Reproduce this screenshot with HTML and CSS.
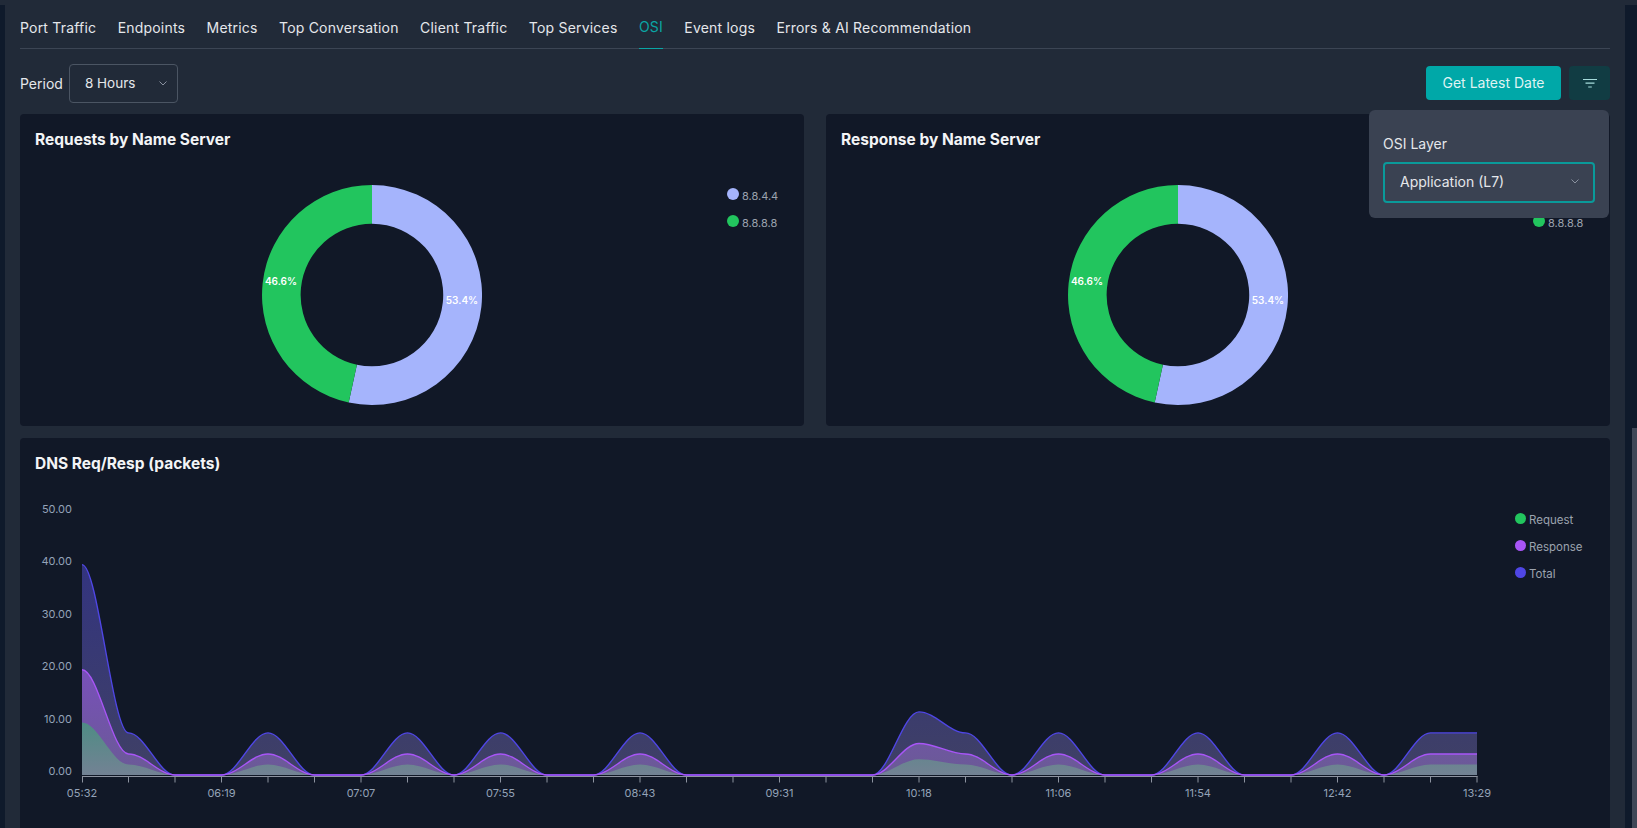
FILE: index.html
```html
<!DOCTYPE html>
<html lang="en">
<head>
<meta charset="utf-8">
<title>OSI</title>
<link rel="stylesheet" href="styles.css">
</head>
<body>
<div class="app">
  <div class="rail"></div>
  <main class="main">
    <nav class="tabs">
      <a class="tab">Port Traffic</a>
      <a class="tab">Endpoints</a>
      <a class="tab">Metrics</a>
      <a class="tab">Top Conversation</a>
      <a class="tab">Client Traffic</a>
      <a class="tab">Top Services</a>
      <a class="tab active">OSI</a>
      <a class="tab">Event logs</a>
      <a class="tab">Errors &amp; AI Recommendation</a>
    </nav>
    <div class="toolbar">
      <div class="period">
        <span class="period-label">Period</span>
        <div class="select select-period">
          <span>8 Hours</span>
          <svg class="chev" viewBox="0 0 8 5"><path d="M.5.5 4 4 7.5.5" fill="none" stroke="currentColor"/></svg>
        </div>
      </div>
      <div class="actions">
        <button class="btn-primary">Get Latest Date</button>
        <button class="btn-filter" aria-label="Filter">
          <svg viewBox="0 0 14 9" width="14" height="9"><path d="M0 .5h14M2.5 4.2h9M5.2 8h3.6" stroke="#a6dcdc" stroke-width="1.2" fill="none"/></svg>
        </button>
        <div class="popover">
          <div class="pop-label">OSI Layer</div>
          <div class="select select-focus">
            <span>Application (L7)</span>
            <svg class="chev" viewBox="0 0 8 5"><path d="M.5.5 4 4 7.5.5" fill="none" stroke="currentColor"/></svg>
          </div>
        </div>
      </div>
    </div>

    <section class="donut-row">
      <article class="card">
        <h2 class="card-title">Requests by Name Server</h2>
        <div class="donut-body">
          <div class="donut-area">
            <svg class="donut" viewBox="0 0 220 220" width="220" height="220">
              <path d="M110 0A110 110 0 1 1 86.7 217.5L94.9 179.7A71.3 71.3 0 1 0 110 38.7Z" fill="#a5b4fc"/>
              <path d="M86.7 217.5A110 110 0 0 1 110 0V38.7A71.3 71.3 0 0 0 94.9 179.7Z" fill="#22c55e"/>
              <text class="pct" x="200" y="119">53.4%</text>
              <text class="pct" x="19" y="100">46.6%</text>
            </svg>
          </div>
          <ul class="legend legend-small">
            <li><i class="dot dot-indigo"></i>8.8.4.4</li>
            <li><i class="dot dot-green"></i>8.8.8.8</li>
          </ul>
        </div>
      </article>
      <article class="card">
        <h2 class="card-title">Response by Name Server</h2>
        <div class="donut-body">
          <div class="donut-area">
            <svg class="donut" viewBox="0 0 220 220" width="220" height="220">
              <path d="M110 0A110 110 0 1 1 86.7 217.5L94.9 179.7A71.3 71.3 0 1 0 110 38.7Z" fill="#a5b4fc"/>
              <path d="M86.7 217.5A110 110 0 0 1 110 0V38.7A71.3 71.3 0 0 0 94.9 179.7Z" fill="#22c55e"/>
              <text class="pct" x="200" y="119">53.4%</text>
              <text class="pct" x="19" y="100">46.6%</text>
            </svg>
          </div>
          <ul class="legend legend-small">
            <li><i class="dot dot-indigo"></i>8.8.4.4</li>
            <li><i class="dot dot-green"></i>8.8.8.8</li>
          </ul>
        </div>
      </article>
    </section>

    <article class="card card-wide">
      <h2 class="card-title">DNS Req/Resp (packets)</h2>
      <div class="wide-body">
        <svg class="area-chart" viewBox="20 0 1480 330" width="1480" height="330">
          <defs>
            <linearGradient id="gTotal" gradientUnits="userSpaceOnUse" x1="0" y1="80" x2="0" y2="291">
              <stop offset="0" stop-color="#33347f"/><stop offset="1" stop-color="#3f4065"/>
            </linearGradient>
            <linearGradient id="gResp" gradientUnits="userSpaceOnUse" x1="0" y1="185" x2="0" y2="291">
              <stop offset="0" stop-color="#7850ba"/><stop offset="1" stop-color="#6a5a95"/>
            </linearGradient>
            <linearGradient id="gReq" gradientUnits="userSpaceOnUse" x1="0" y1="238" x2="0" y2="291">
              <stop offset="0" stop-color="#4e8c84"/><stop offset="1" stop-color="#738294"/>
            </linearGradient>
          </defs>
          <g class="ylabels">
            <text x="72" y="29">50.00</text>
            <text x="72" y="81">40.00</text>
            <text x="72" y="134">30.00</text>
            <text x="72" y="186">20.00</text>
            <text x="72" y="239">10.00</text>
            <text x="72" y="291">0.00</text>
          </g>

          <path fill="url(#gTotal)" d="M82 80.6c16 0 30.5 168.3 46.5 168.3c16 0 30.5 42.1 46.5 42.1h46.5c16 0 30.5 -42.1 46.5 -42.1c16 0 30.5 42.1 46.5 42.1h46.5c16 0 30.5 -42.1 46.5 -42.1c16 0 30.5 42.1 46.5 42.1c16 0 30.5 -42.1 46.5 -42.1c16 0 30.5 42.1 46.5 42.1h46.5c16 0 30.5 -42.1 46.5 -42.1c16 0 30.5 42.1 46.5 42.1h186c16 0 30.5 -63.1 46.5 -63.1c16 0 30.5 21 46.5 21c16 0 30.5 42.1 46.5 42.1c16 0 30.5 -42.1 46.5 -42.1c16 0 30.5 42.1 46.5 42.1h46.5c16 0 30.5 -42.1 46.5 -42.1c16 0 30.5 42.1 46.5 42.1h46.5c16 0 30.5 -42.1 46.5 -42.1c16 0 30.5 42.1 46.5 42.1c16 0 30.5 -42.1 46.5 -42.1h46.5V291H82Z"/>
          <path fill="url(#gResp)" d="M82 185.8c16 0 30.5 84.15 46.5 84.15c16 0 30.5 21.05 46.5 21.05h46.5c16 0 30.5 -21.05 46.5 -21.05c16 0 30.5 21.05 46.5 21.05h46.5c16 0 30.5 -21.05 46.5 -21.05c16 0 30.5 21.05 46.5 21.05c16 0 30.5 -21.05 46.5 -21.05c16 0 30.5 21.05 46.5 21.05h46.5c16 0 30.5 -21.05 46.5 -21.05c16 0 30.5 21.05 46.5 21.05h186c16 0 30.5 -31.55 46.5 -31.55c16 0 30.5 10.5 46.5 10.5c16 0 30.5 21.05 46.5 21.05c16 0 30.5 -21.05 46.5 -21.05c16 0 30.5 21.05 46.5 21.05h46.5c16 0 30.5 -21.05 46.5 -21.05c16 0 30.5 21.05 46.5 21.05h46.5c16 0 30.5 -21.05 46.5 -21.05c16 0 30.5 21.05 46.5 21.05c16 0 30.5 -21.05 46.5 -21.05h46.5V291H82Z"/>
          <path fill="url(#gReq)" d="M82 238.4c16 0 30.5 42.1 46.5 42.1c16 0 30.5 10.5 46.5 10.5h46.5c16 0 30.5 -10.5 46.5 -10.5c16 0 30.5 10.5 46.5 10.5h46.5c16 0 30.5 -10.5 46.5 -10.5c16 0 30.5 10.5 46.5 10.5c16 0 30.5 -10.5 46.5 -10.5c16 0 30.5 10.5 46.5 10.5h46.5c16 0 30.5 -10.5 46.5 -10.5c16 0 30.5 10.5 46.5 10.5h186c16 0 30.5 -15.8 46.5 -15.8c16 0 30.5 5.3 46.5 5.3c16 0 30.5 10.5 46.5 10.5c16 0 30.5 -10.5 46.5 -10.5c16 0 30.5 10.5 46.5 10.5h46.5c16 0 30.5 -10.5 46.5 -10.5c16 0 30.5 10.5 46.5 10.5h46.5c16 0 30.5 -10.5 46.5 -10.5c16 0 30.5 10.5 46.5 10.5c16 0 30.5 -10.5 46.5 -10.5h46.5V291H82Z"/>

          <path class="axis" d="M82 292.5H1477.5M82.5 292v6.5M128.5 292v6.5M175 292v6.5M221.5 292v6.5M268 292v6.5M314.5 292v6.5M361 292v6.5M407.5 292v6.5M454 292v6.5M500.5 292v6.5M547 292v6.5M593.5 292v6.5M640 292v6.5M686.5 292v6.5M733 292v6.5M779.5 292v6.5M826 292v6.5M872.5 292v6.5M919 292v6.5M965.5 292v6.5M1012 292v6.5M1058.5 292v6.5M1105 292v6.5M1151.5 292v6.5M1198 292v6.5M1244.5 292v6.5M1291 292v6.5M1337.5 292v6.5M1384 292v6.5M1430.5 292v6.5M1477 292v6.5"/>

          <path class="line line-total" d="M82 80.6c16 0 30.5 168.3 46.5 168.3c16 0 30.5 42.1 46.5 42.1h46.5c16 0 30.5 -42.1 46.5 -42.1c16 0 30.5 42.1 46.5 42.1h46.5c16 0 30.5 -42.1 46.5 -42.1c16 0 30.5 42.1 46.5 42.1c16 0 30.5 -42.1 46.5 -42.1c16 0 30.5 42.1 46.5 42.1h46.5c16 0 30.5 -42.1 46.5 -42.1c16 0 30.5 42.1 46.5 42.1h186c16 0 30.5 -63.1 46.5 -63.1c16 0 30.5 21 46.5 21c16 0 30.5 42.1 46.5 42.1c16 0 30.5 -42.1 46.5 -42.1c16 0 30.5 42.1 46.5 42.1h46.5c16 0 30.5 -42.1 46.5 -42.1c16 0 30.5 42.1 46.5 42.1h46.5c16 0 30.5 -42.1 46.5 -42.1c16 0 30.5 42.1 46.5 42.1c16 0 30.5 -42.1 46.5 -42.1h46.5"/>
          <path class="line line-resp" d="M82 185.8c16 0 30.5 84.15 46.5 84.15c16 0 30.5 21.05 46.5 21.05h46.5c16 0 30.5 -21.05 46.5 -21.05c16 0 30.5 21.05 46.5 21.05h46.5c16 0 30.5 -21.05 46.5 -21.05c16 0 30.5 21.05 46.5 21.05c16 0 30.5 -21.05 46.5 -21.05c16 0 30.5 21.05 46.5 21.05h46.5c16 0 30.5 -21.05 46.5 -21.05c16 0 30.5 21.05 46.5 21.05h186c16 0 30.5 -31.55 46.5 -31.55c16 0 30.5 10.5 46.5 10.5c16 0 30.5 21.05 46.5 21.05c16 0 30.5 -21.05 46.5 -21.05c16 0 30.5 21.05 46.5 21.05h46.5c16 0 30.5 -21.05 46.5 -21.05c16 0 30.5 21.05 46.5 21.05h46.5c16 0 30.5 -21.05 46.5 -21.05c16 0 30.5 21.05 46.5 21.05c16 0 30.5 -21.05 46.5 -21.05h46.5"/>

          <g class="xlabels">
            <text x="82" y="313">05:32</text>
            <text x="221.5" y="313">06:19</text>
            <text x="361" y="313">07:07</text>
            <text x="500.5" y="313">07:55</text>
            <text x="640" y="313">08:43</text>
            <text x="779.5" y="313">09:31</text>
            <text x="919" y="313">10:18</text>
            <text x="1058.5" y="313">11:06</text>
            <text x="1198" y="313">11:54</text>
            <text x="1337.5" y="313">12:42</text>
            <text x="1477" y="313">13:29</text>
          </g>
        </svg>
        <ul class="legend legend-wide">
          <li><i class="dot dot-green"></i>Request</li>
          <li><i class="dot dot-purple"></i>Response</li>
          <li><i class="dot dot-blue"></i>Total</li>
        </ul>
      </div>
    </article>
  </main>
  <div class="scroll-track"><div class="scroll-thumb"></div></div>
</div>
</body>
</html>
```
FILE: styles.css
```css
* { box-sizing: border-box; }
html, body { margin: 0; height: 100%; overflow: hidden; background: #212a38; }
body { font-family: Inter, "Liberation Sans", sans-serif; color: #e5e7eb; }
.app { display: flex; height: 828px; }
.rail { width: 5px; flex: none; margin-top: 5px; background: #0f1a2b; }
.main { width: 1620px; flex: none; padding: 0 15px; background: #212a38; overflow: hidden; }
.scroll-track { width: 12px; flex: none; margin-top: 5px; display: flex; justify-content: flex-end; padding-top: 423px; background: #0f1a2b; }
.scroll-thumb { width: 5px; height: 400px; background: #3f4757; }

.tabs { display: flex; gap: 21.4px; height: 49px; border-bottom: 1px solid #3c4554; }
.tab { height: 49px; display: flex; align-items: center; padding-top: 5px; font-size: 14px; color: #e5e7eb; letter-spacing: .2px; white-space: nowrap; }
.tab.active { color: #0aa5a5; border-bottom: 1px solid #0aa5a5; padding-top: 4px; }

.toolbar { display: flex; justify-content: space-between; align-items: center; height: 65px; padding-top: 3px; }
.period { display: flex; align-items: center; gap: 6px; }
.period-label { font-size: 14px; color: #e5e7eb; }
.select { display: flex; align-items: center; justify-content: space-between; width: 109px; height: 39px; padding: 0 10px 0 15px; border: 1px solid #4b5563; border-radius: 4px; font-size: 14px; color: #e5e7eb; }
.select-period { font-size: 13.5px; }
.chev { width: 8px; height: 5px; color: #8a92a0; }

.actions { position: relative; display: flex; gap: 8px; align-items: center; }
.btn-primary { width: 135px; height: 34px; padding: 0 0 2px; border: 0; border-radius: 4px; background: #00a8a8; color: #dff3f3; font: 400 14px Inter, "Liberation Sans", sans-serif; }
.btn-filter { display: flex; align-items: center; justify-content: center; width: 41px; height: 34px; border: 0; border-radius: 4px; background: #113c43; }
.popover { position: absolute; z-index: 5; top: 44px; right: 1px; width: 240px; height: 108px; padding: 25px 14px 0; background: #3a4252; border-radius: 6px; }
.pop-label { font-size: 14px; line-height: 18px; color: #e5e7eb; margin-bottom: 9px; }
.select-focus { width: 212px; height: 41px; padding: 0 14px 2px 15px; border: 2px solid #0a9a9a; }

.donut-row { display: flex; gap: 22px; }
.card { flex: 1; height: 312px; background: #111827; border-radius: 4px; }
.card-title { margin: 0; padding: 16px 15px 0; font-size: 15.5px; line-height: 20px; font-weight: 700; color: #f3f4f6; }
.donut-body { display: flex; }
.donut-area { flex: 1; display: flex; justify-content: center; padding-top: 35px; }
.donut { display: block; }
.pct { font: 600 10px Inter, "Liberation Sans", sans-serif; fill: #fff; text-anchor: middle; }

.legend { list-style: none; margin: 0; padding: 0; color: #9ca3af; }
.legend li { display: flex; align-items: center; white-space: nowrap; }
.dot { display: block; border-radius: 50%; }
.dot-indigo { background: #a5b4fc; }
.dot-green { background: #22c55e; }
.dot-purple { background: #a855f7; }
.dot-blue { background: #4f46e5; }
.legend-small { flex: none; width: 81px; padding: 32px 0 0 4px; font-size: 11px; }
.legend-small li { height: 27px; gap: 3px; }
.legend-small .dot { width: 12px; height: 12px; margin-top: -3px; }
.legend-wide { flex: none; padding: 32px 0 0 15px; font-size: 11.5px; }
.legend-wide li { height: 27px; gap: 3px; }
.legend-wide .dot { width: 11px; height: 11px; margin-top: -3px; }

.card-wide { margin-top: 12px; height: 420px; }
.wide-body { display: flex; height: 370px; }
.area-chart { display: block; flex: none; margin-top: 10px; }
.ylabels text { font-size: 11px; fill: #94a3b8; text-anchor: end; }
.xlabels text { font-size: 11px; fill: #94a3b8; text-anchor: middle; }
.axis { fill: none; stroke: #8d93a0; stroke-width: 1; }
.line { fill: none; stroke-width: 1.4; }
.line-total { stroke: #4f46e5; }
.line-resp { stroke: #a855f7; }
```
